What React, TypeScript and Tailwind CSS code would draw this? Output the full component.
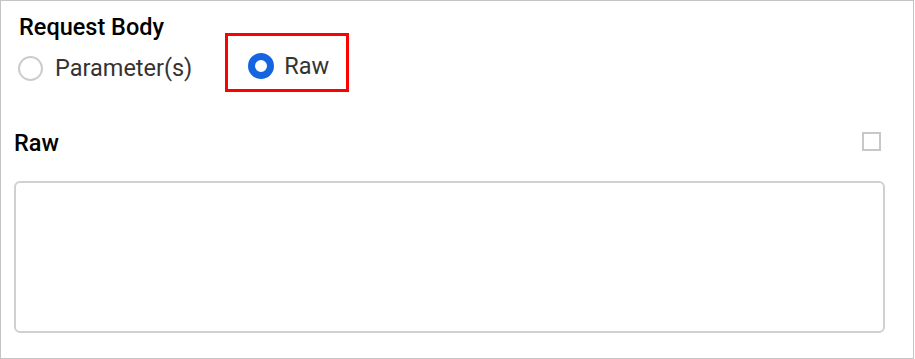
import { useState } from 'react';

export default function App() {
  const [mode, setMode] = useState<'params' | 'raw'>('raw');
  const [body, setBody] = useState('');

  return (
    <div className="w-[914px] h-[359px] border border-[#c4c4c4] bg-white font-['Roboto',sans-serif]">
      <h2 className="pl-[18px] pt-[18px] text-[23.5px] font-medium text-black leading-[16px]">Request Body</h2>

      <div className="flex items-start pl-[17px] -mt-[2px]">
        <label className="flex items-center h-[28px] mt-[21px] cursor-pointer" onClick={() => setMode('params')}>
          <span
            className={
              mode === 'params'
                ? 'w-[25px] h-[25px] rounded-full border-[7px] border-[#1565e0] bg-white'
                : 'w-[25px] h-[25px] rounded-full border-2 border-[#cccccc] bg-white'
            }
          />
          <span className="ml-[12px] text-[23.5px] leading-[28px] text-[#333333]">Parameter(s)</span>
        </label>

        <div className="ml-[33px] w-[124px] h-[59px] border-[3px] border-[#ff0000] pl-[20px] pt-[16px]">
          <label className="flex items-center h-[28px] cursor-pointer" onClick={() => setMode('raw')}>
            <span
              className={
                mode === 'raw'
                  ? 'w-[26px] h-[26px] rounded-full border-[7px] border-[#1565e0] bg-white'
                  : 'w-[26px] h-[26px] rounded-full border-2 border-[#cccccc] bg-white'
              }
            />
            <span className="ml-[10px] text-[23.5px] leading-[28px] text-[#333333]">Raw</span>
          </label>
        </div>
      </div>

      <div className="pl-[13px] pr-[29px] mt-[37px]">
        <div className="flex items-center justify-between h-[28px]">
          <span className="text-[23.5px] font-medium text-black leading-[28px]">Raw</span>
          <span className="w-[19px] h-[19px] border-2 border-[#c8c8c8] mr-[3px] -mt-[3px]" />
        </div>
        <textarea
          value={body}
          onChange={(e) => setBody(e.target.value)}
          className="mt-[24px] block w-[871px] h-[152px] border-2 border-[#d0d0d0] rounded-[6px] resize-none outline-none p-2"
        />
      </div>
    </div>
  );
}
